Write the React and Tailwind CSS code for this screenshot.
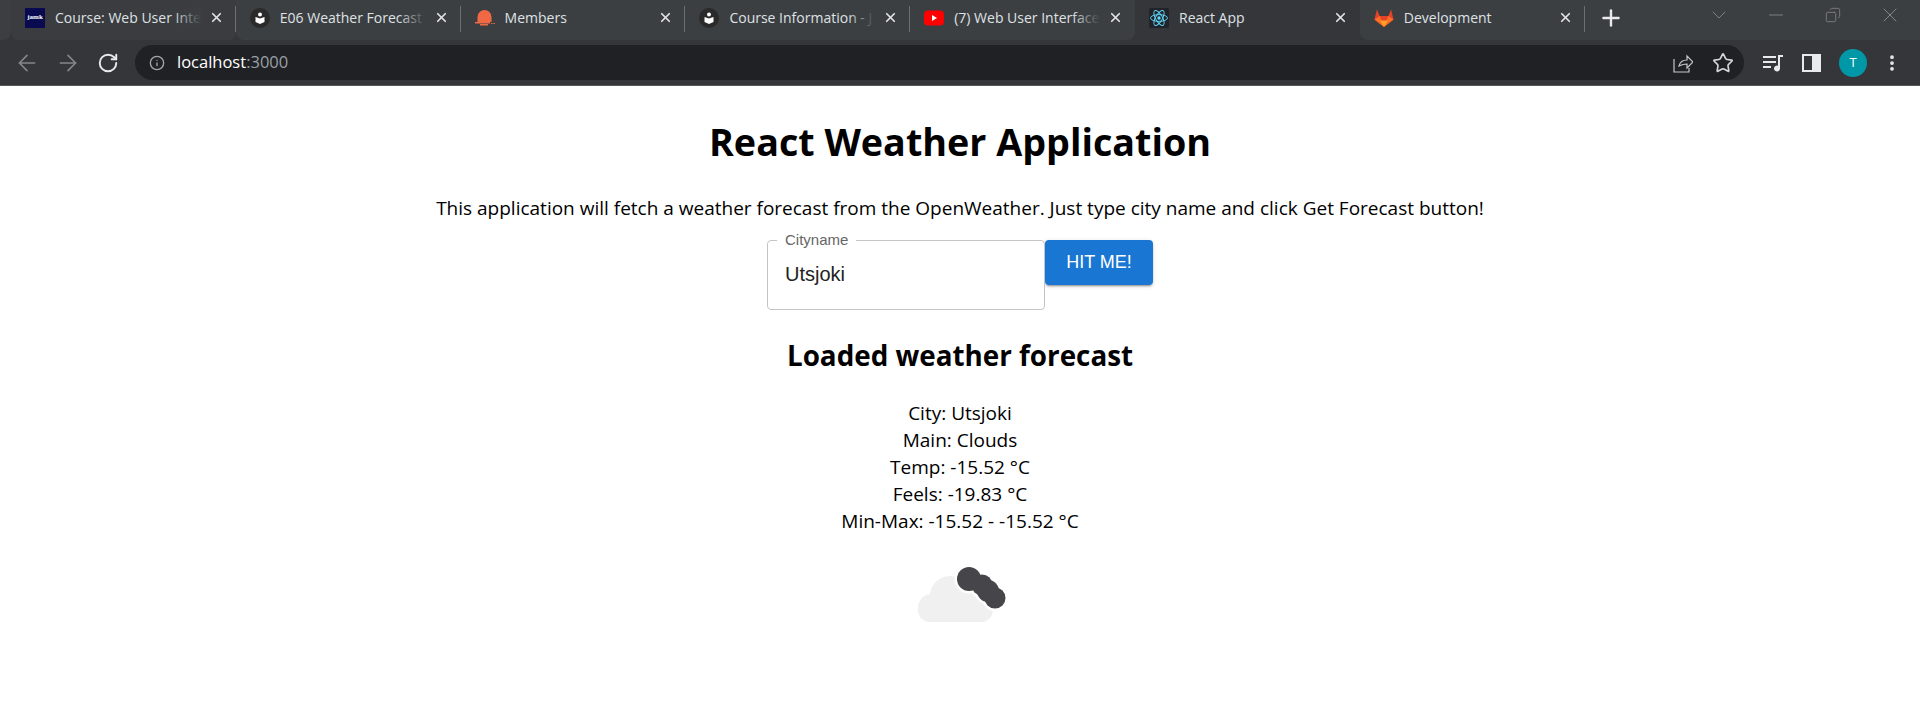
import { ArrowLeft, ArrowRight, RotateCw, Info, Star, Plus, X, Minus, ChevronDown, Copy, MoreVertical } from 'lucide-react'

const tabs = [
  { title: 'Course: Web User Inte', icon: 'jamk', sep: true, cls: 'bg-[#3a3c3f] rounded-b-lg' },
  { title: 'E06 Weather Forecast', icon: 'book', sep: true, cls: 'bg-[#3c3f42] rounded-bl-lg' },
  { title: 'Members', icon: 'bell', sep: true, cls: 'bg-[#3c3f42]' },
  { title: 'Course Information - J', icon: 'book', sep: true, cls: 'bg-[#3c3f42]' },
  { title: '(7) Web User Interface', icon: 'yt', cls: 'bg-[#3c3f42] rounded-br-lg' },
  { title: 'React App', icon: 'react', active: true },
  { title: 'Development', icon: 'gitlab', sep: true, cls: 'bg-[#3c3f42] rounded-bl-lg' },
]

function TabIcon({ type }) {
  if (type === 'jamk') {
    return (
      <div className="w-5 h-5 shrink-0 bg-[#0a0a50] text-white text-[7px] font-bold flex items-center justify-center font-['Liberation_Serif',serif]">
        jamk
      </div>
    )
  }
  if (type === 'book') {
    return (
      <svg width="20" height="20" viewBox="0 0 20 20" className="shrink-0">
        <circle cx="10" cy="10" r="10" fill="#2a2a2a" />
        <circle cx="10" cy="6.500" r="2" fill="#fff" />
        <path d="M5.500 9l4.500 1.500L14.500 9v5L10 16l-4.500-2z" fill="#fff" />
      </svg>
    )
  }
  if (type === 'bell') {
    return (
      <svg width="20" height="20" viewBox="0 0 20 20" className="shrink-0">
        <path d="M2.500 9a7 7 0 0 1 14 0v5h-14z" fill="#ef6a44" />
        <path d="M0 14h15v1.500H0zM5 16h8v1.500H5z" fill="#ef6a44" />
        <path d="M16 15h1.500v1H16zM18.500 15H20v1h-1.500z" fill="#ef6a44" />
      </svg>
    )
  }
  if (type === 'yt') {
    return (
      <svg width="20" height="20" viewBox="0 0 20 20" className="shrink-0">
        <rect x="0" y="2.500" width="20" height="15" rx="4" fill="#ff0000" />
        <path d="M8 7l5 3-5 3z" fill="#fff" />
      </svg>
    )
  }
  if (type === 'react') {
    return (
      <svg width="20" height="20" viewBox="0 0 20 20" className="shrink-0">
        <rect width="20" height="20" rx="2" fill="#20232a" />
        <g fill="none" stroke="#61dafb" strokeWidth="0.9">
          <ellipse cx="10" cy="10" rx="8.500" ry="3.400" />
          <ellipse cx="10" cy="10" rx="8.500" ry="3.400" transform="rotate(60 10 10)" />
          <ellipse cx="10" cy="10" rx="8.500" ry="3.400" transform="rotate(120 10 10)" />
        </g>
        <circle cx="10" cy="10" r="1.700" fill="#61dafb" />
      </svg>
    )
  }
  return (
    <svg width="20" height="20" viewBox="0 0 21 20" className="shrink-0">
      <path d="M.5 11.500L3 1l3 7h9l3-7 2.500 10.500-10 8z" fill="#e24329" />
      <path d="M.5 11.500L6 8l4.500 11.500z" fill="#fc6d26" />
      <path d="M20.500 11.500L15 8l-4.500 11.500z" fill="#fc6d26" />
      <path d="M6.500 12.500h8l-4 7z" fill="#fca326" />
    </svg>
  )
}

function Tab({ title, icon, active, sep, cls }) {
  const fade = active ? 'from-[#35363a]/0 to-[#35363a]' : 'from-[#3c3f42]/0 to-[#3c3f42]'
  return (
    <div className={`relative w-[224.800px] flex items-center pl-[14px] pr-[12px] shrink-0 ${active ? 'h-[45px] pb-[10px] bg-[#35363a] rounded-t-lg' : 'h-[40px] pb-[5px]'} ${cls || ''}`}>
      <TabIcon type={icon} />
      <div className="relative ml-[10px] flex-1 overflow-hidden whitespace-nowrap text-[14px] text-[#dfe2e5]">
        {title}
        <div className={`absolute right-0 top-0 bottom-0 w-7 bg-gradient-to-r ${fade}`}></div>
      </div>
      <X size={15} strokeWidth={2.800} className="text-[#dfe1e5] ml-2 shrink-0" />
      {sep && <div className="absolute right-0 top-[6px] h-[26px] w-px bg-[#6d7073]"></div>}
    </div>
  )
}

export default function App() {
  return (
    <div className="min-h-[717px] bg-white flex flex-col font-['Open_Sans',sans-serif]">

      {/* Tab strip */}
      <div className="h-[40px] bg-[#35363a] flex items-start">
        <div className="w-[11px] h-[40px] bg-[#3c3f42] rounded-br-lg shrink-0"></div>
        {tabs.map((t, i) => (
          <Tab key={i} {...t} />
        ))}
        <div className="flex-1 h-[40px] bg-[#3c3f42] flex items-start">
          <div className="h-[36px] flex items-center ml-[13px]">
            <Plus size={26} strokeWidth={2.200} className="text-[#e8eaed]" />
          </div>
          <div className="flex items-center text-[#85888b] ml-auto mr-[2px] h-[30px]">
            <div className="w-[57px] flex justify-center"><ChevronDown size={24} strokeWidth={0.900} /></div>
            <div className="w-[57px] flex justify-center"><Minus size={22} strokeWidth={1} /></div>
            <div className="w-[57px] flex justify-center"><Copy size={16} strokeWidth={1.200} className="-scale-x-100" /></div>
            <div className="w-[57px] flex justify-center"><X size={24} strokeWidth={1} /></div>
          </div>
        </div>
      </div>

      {/* Toolbar */}
      <div className="h-[46px] bg-[#35363a] flex items-center border-b border-[#56575a]">
        <ArrowLeft size={26} strokeWidth={1.500} className="text-[#85878a] ml-[14px]" />
        <ArrowRight size={26} strokeWidth={1.500} className="text-[#85878a] ml-[15px]" />
        <RotateCw size={22} strokeWidth={2.100} className="text-[#e8eaed] ml-[16px]" />
        <div className="ml-[16px] w-[1609px] h-[35px] rounded-full bg-[#202124] flex items-center pl-[14px] pr-[10px]">
          <Info size={16} strokeWidth={2} className="text-[#a4a7aa]" />
          <span className="ml-[12px] text-[16.500px] text-white">localhost<span className="text-[#9aa0a6]">:3000</span></span>
          <svg width="20" height="20" viewBox="0 0 20 20" fill="none" stroke="#c4c7c5" strokeWidth="1.200" className="ml-auto">
            <path d="M1 6v13h15v-4" />
            <path d="M6 13c1-4 4-6 8-6V3l6 6-6 6v-4c-4 0-6 1-8 2z" />
          </svg>
          <Star size={22} strokeWidth={1.800} className="text-[#d4d6d8] ml-[19px]" />
        </div>
        <svg width="20" height="20" viewBox="0 0 20 20" className="ml-[19px]">
          <path d="M0 3h13v2H0zM0 8h13v2H0zM0 13h8v2H0z" fill="#e8eaed" />
          <path d="M15 2h5v2h-3v11.500a3 3 0 1 1-2-2.800z" fill="#e8eaed" />
        </svg>
        <div className="ml-[19px] w-[19px] h-[18px] border-[2px] border-[#e8eaed] flex justify-end">
          <div className="w-[7px] h-full bg-[#e8eaed]"></div>
        </div>
        <div className="ml-[18px] w-[28px] h-[28px] rounded-full bg-[#0097a7] text-white text-[13px] flex items-center justify-center">T</div>
        <MoreVertical size={20} strokeWidth={2.500} className="text-[#e8eaed] ml-[15px]" />
      </div>

      {/* Page */}
      <div className="flex flex-col items-center text-black">
        <h1 className="text-[37.700px] leading-[54px] font-bold mt-[29px]">React Weather Application</h1>
        <p className="text-[19px] leading-[28px] mt-[25px]">
          This application will fetch a weather forecast from the OpenWeather. Just type city name and click Get Forecast button!
        </p>
        <div className="flex items-start mt-[18px] font-['Liberation_Sans',sans-serif]">
          <div className="relative w-[278px] h-[70px] border border-[#c4c4c4] rounded bg-white flex items-center pl-[17px] pb-[2px]">
            <span className="absolute -top-[10px] left-[9px] bg-white px-[8px] text-[15px] leading-[18px] text-[#666]">Cityname</span>
            <span className="text-[20px] text-[#222]">Utsjoki</span>
          </div>
          <button className="h-[45px] w-[108px] rounded bg-[#1976d2] text-white text-[18px] font-medium shadow-[0_3px_1px_-2px_rgba(0,0,0,0.2),0_2px_2px_0_rgba(0,0,0,0.14),0_1px_5px_0_rgba(0,0,0,0.12)]">
            HIT ME!
          </button>
        </div>
        <h2 className="text-[27.800px] leading-[40px] font-bold mt-[25px]">Loaded weather forecast</h2>
        <div className="text-[19px] leading-[27px] text-center mt-[25px]">
          <p>City: Utsjoki</p>
          <p>Main: Clouds</p>
          <p>Temp: -15.52 °C</p>
          <p>Feels: -19.83 °C</p>
          <p>Min-Max: -15.52 - -15.52 °C</p>
        </div>
        <svg width="100" height="100" viewBox="0 0 100 100" className="mt-[19px] blur-[0.5px]">
          <g fill="#f0f0f0">
            <circle cx="40" cy="42" r="20" />
            <circle cx="22" cy="54" r="14" />
            <circle cx="70" cy="56" r="12" />
            <rect x="8" y="44" width="75" height="24" rx="12" />
            <rect x="30" y="36" width="40" height="20" />
          </g>
          <g fill="#ffffff" stroke="#ffffff" strokeWidth="5">
            <circle cx="59" cy="25" r="12" />
            <circle cx="72" cy="31" r="10.500" />
            <circle cx="78" cy="37" r="11" />
            <circle cx="85" cy="44" r="10.500" />
          </g>
          <g fill="#46464a">
            <circle cx="59" cy="25" r="12" />
            <circle cx="72" cy="31" r="10.500" />
            <circle cx="78" cy="37" r="11" />
            <circle cx="85" cy="44" r="10.500" />
          </g>
        </svg>
      </div>
    </div>
  )
}
